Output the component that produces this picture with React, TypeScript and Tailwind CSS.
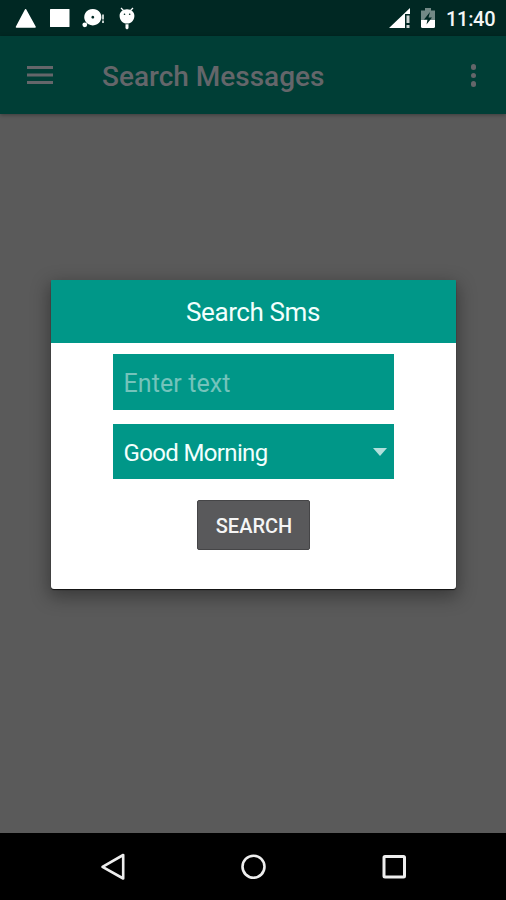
import React, { useState } from 'react';

const StatusBar: React.FC = () => (
  <div className="flex h-9 shrink-0 items-center justify-between bg-[#002823]">
    <svg className="h-9 w-40" viewBox="0 0 160 36" fill="#fff">
      {/* Triangle */}
      <path d="M25.6 9.8 35 27H16.5Z" stroke="#fff" strokeWidth="1.6" strokeLinejoin="round" />
      {/* Square */}
      <rect x="50" y="9" width="19.5" height="18" rx="0.5" />
      {/* Disc */}
      <path fillRule="evenodd" d="M92.8 9a8.6 8.2 0 1 0 .01 0ZM92.8 15.8a1.4 1.4 0 1 1-.01 0Z" />
      <circle cx="84.8" cy="24.8" r="2.4" />
      <path d="M102 14.5h2v5h-2zM102 20.5h2v2.500h-2z" opacity="0.75" />
      {/* Android head on a stick */}
      <path d="M127 9.2c4.6 0 7.4 3 7.4 6.6 0 4.2-2.8 7.8-7.4 7.8s-7.4-3.6-7.4-7.8c0-3.6 2.8-6.6 7.4-6.6Z" />
      <path d="m123.500 10.500-2.500-2.500M130.500 10.500l2.500-2.500" stroke="#fff" strokeWidth="1.300" />
      <path d="M125.500 24.200h3v4l-1.500 1.300-1.500-1.300z" />
      <circle cx="124.500" cy="14.200" r="0.800" fill="#002823" />
      <circle cx="129.700" cy="14.200" r="0.800" fill="#002823" />
    </svg>
    <div className="flex items-center">
      <svg className="h-9 w-[67px]" viewBox="378 0 67 36" fill="#fff">
        {/* Signal with warning mark */}
        <path d="M389 28 410 8v6h-5v14z" />
        <path d="M406.500 15.500h3v7.500h-3zM406.500 25h3v3h-3z" opacity="0.8" />
        {/* Charging battery */}
        <path d="M421 10.500h4V8h6v2.500h4V20h-14z" opacity="0.45" />
        <path d="M421 20h14v6.500q0 1.500-1.500 1.500h-11q-1.500 0-1.500-1.500z" />
        <path d="m430 12-6 7.500h3.500l-1 5 5.500-7h-3.500z" fill="#002823" />
      </svg>
      <span className="w-[61px] whitespace-nowrap pl-px pt-0.5 text-[20px] font-medium leading-8 tracking-[-0.3px] text-[#f4f7f6]">
        11:40
      </span>
    </div>
  </div>
);

const Toolbar: React.FC = () => (
  <header className="flex h-[78px] shrink-0 items-center bg-[#003e36] pl-[27px] pr-[30px] shadow-[0_1px_4px_rgba(0,0,0,0.35)]">
    <button aria-label="Menu">
      <svg className="h-[22px] w-[26px]" viewBox="0 0 26 22" fill="#64666a">
        <path d="M0 2h26v3H0zM0 9.500h26v3H0zM0 17h26v3H0z" />
      </svg>
    </button>
    <h1 className="ml-[49px] flex-1 whitespace-nowrap pt-[3px] text-[28px] font-medium text-[#64666a]">
      Search Messages
    </h1>
    <button aria-label="More options" className="flex flex-col gap-[3px] pt-px">
      <span className="size-[5.500px] rounded-full bg-[#64666a]"></span>
      <span className="size-[5.500px] rounded-full bg-[#64666a]"></span>
      <span className="size-[5.500px] rounded-full bg-[#64666a]"></span>
    </button>
  </header>
);

const SearchDialog: React.FC = () => {
  const [text, setText] = useState('');

  return (
    <div className="flex h-[309px] w-[405px] flex-col items-center rounded-[3px] bg-white shadow-[0_1px_1px_#111,0_6px_18px_2px_rgba(0,0,0,0.36)]">
      <h2 className="h-[63px] w-full rounded-t-[1px] bg-[#009788] pt-px text-center text-[26px] leading-[63px] tracking-[-0.4px] text-[#f2fffd]">
        Search Sms
      </h2>
      <input
        value={text}
        onChange={(e) => setText(e.target.value)}
        placeholder="Enter text"
        className="mt-[11px] h-14 w-[281px] bg-[#009788] px-[11px] pt-0.5 text-[25px] tracking-[0.1px] text-white outline-none placeholder:text-[#74c3bb]"
      />
      <button className="mt-3.5 flex h-[55px] w-[281px] items-center justify-between bg-[#009788] pl-[11px] pr-[7px] text-[24px] tracking-[-0.65px] text-[#f2fffd]">
        <span className="pt-0.5">Good Morning</span>
        <svg className="h-[8px] w-3.5" viewBox="0 0 14 8" fill="#b2dfdb">
          <path d="M0 0h14L7 8z" />
        </svg>
      </button>
      <button className="mt-[21px] h-[50px] w-[113px] rounded-[2px] border border-[#454547] bg-[#59595b] pl-0.5 pt-0.5 text-[20px] font-medium text-[#f5f5f5]">
        SEARCH
      </button>
    </div>
  );
};

const NavigationBar: React.FC = () => (
  <nav className="flex h-[67px] shrink-0 items-center justify-between bg-black px-[99px]">
    <button aria-label="Back">
      <svg className="size-7" viewBox="0 0 28 28" fill="none" stroke="#eee" strokeWidth="2.600" strokeLinejoin="round">
        <path d="M24.200 2v23.500L3.500 13.800z" />
      </svg>
    </button>
    <button aria-label="Home">
      <svg className="size-7" viewBox="0 0 28 28" fill="none" stroke="#eee" strokeWidth="2.600">
        <circle cx="14.500" cy="13.700" r="11" />
      </svg>
    </button>
    <button aria-label="Recents">
      <svg className="size-7" viewBox="0 0 28 28" fill="none" stroke="#eee" strokeWidth="3">
        <rect x="5" y="3.500" width="20.500" height="20.500" rx="1" />
      </svg>
    </button>
  </nav>
);

const App: React.FC = () => {
  return (
    <div className="flex h-screen w-full flex-col overflow-hidden bg-[#5a5a5a] font-['Roboto',sans-serif]">
      <StatusBar />
      <div className="relative flex flex-1 flex-col">
        <Toolbar />
        <main className="flex-1"></main>

        {/* Dialog */}
        <div className="absolute inset-0 flex items-center justify-center">
          <SearchDialog />
        </div>
      </div>
      <NavigationBar />
    </div>
  );
};

export default App;
